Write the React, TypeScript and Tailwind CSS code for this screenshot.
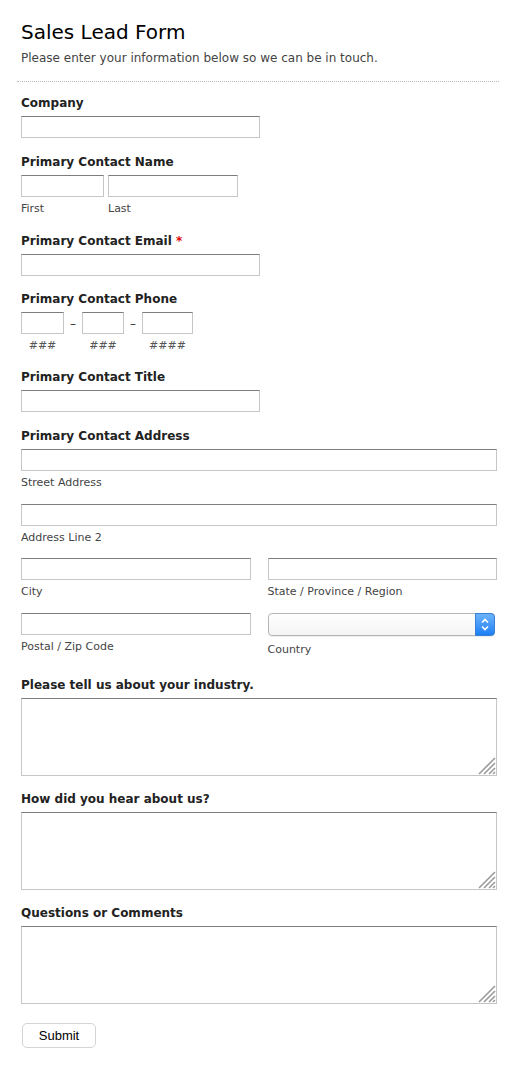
import React from "react";

const font = { fontFamily: '"DejaVu Sans", "Noto Sans", sans-serif' };

const inputCls =
  "block h-[22px] bg-white border border-[#c6c6c6] border-t-[#7d7d7d] outline-none";

function Label({ children }: { children: React.ReactNode }) {
  return (
    <div className="text-[12px] leading-[14px] font-bold text-[#222] mb-[6px]">
      {children}
    </div>
  );
}

function Sub({ children, className = "" }: { children: React.ReactNode; className?: string }) {
  return <div className={"text-[11px] leading-[13px] text-[#444] mt-[5px] " + className}>{children}</div>;
}

function Grip() {
  return (
    <svg className="absolute right-[1px] bottom-[1px] pointer-events-none" width="20" height="20" viewBox="0 0 20 20">
      <g stroke="#9a9a9a" strokeWidth="1.6">
        <line x1="19" y1="3" x2="3" y2="19" />
        <line x1="19" y1="8" x2="8" y2="19" />
        <line x1="19" y1="13" x2="13" y2="19" />
        <line x1="19" y1="17" x2="17" y2="19" />
      </g>
    </svg>
  );
}

function Area() {
  return (
    <div className="relative h-[78px]">
      <textarea className="block w-full h-[78px] resize-none bg-white border border-[#c6c6c6] border-t-[#7d7d7d] outline-none" />
      <Grip />
    </div>
  );
}

export default function App() {
  return (
    <div className="bg-white min-h-[1070px] pl-[21px] pr-[19px] pt-[20px]" style={font}>
      <div className="-ml-[4px] -mr-[2px] pl-[4px] pb-[16px] border-b border-dotted border-[#bbb]">
        <h1 className="text-[20px] leading-[24px] text-black font-normal">Sales Lead Form</h1>
        <p className="mt-[7px] text-[12px] leading-[14px] text-[#444]">
          Please enter your information below so we can be in touch.
        </p>
      </div>

      <div className="mt-[14px]">
        <Label>Company</Label>
        <input className={inputCls + " w-[239px]"} />
      </div>

      <div className="mt-[17px]">
        <Label>Primary Contact Name</Label>
        <div className="flex gap-[4px]">
          <div>
            <input className={inputCls + " w-[83px]"} />
            <Sub>First</Sub>
          </div>
          <div>
            <input className={inputCls + " w-[130px]"} />
            <Sub>Last</Sub>
          </div>
        </div>
      </div>

      <div className="mt-[19px]">
        <Label>
          Primary Contact Email <span className="text-[#d00]">*</span>
        </Label>
        <input className={inputCls + " w-[239px]"} />
      </div>

      <div className="mt-[16px]">
        <Label>Primary Contact Phone</Label>
        <div className="flex items-start">
          <div>
            <input className={inputCls + " w-[43px]"} />
            <Sub className="text-center text-[10px] text-[#555]">###</Sub>
          </div>
          <span className="w-[18px] text-center text-[12px] leading-[24px] text-[#333]">–</span>
          <div>
            <input className={inputCls + " w-[42px]"} />
            <Sub className="text-center text-[10px] text-[#555]">###</Sub>
          </div>
          <span className="w-[18px] text-center text-[12px] leading-[24px] text-[#333]">–</span>
          <div>
            <input className={inputCls + " w-[51px]"} />
            <Sub className="text-center text-[10px] text-[#555]">####</Sub>
          </div>
        </div>
      </div>

      <div className="mt-[18px]">
        <Label>Primary Contact Title</Label>
        <input className={inputCls + " w-[239px]"} />
      </div>

      <div className="mt-[17px]">
        <Label>Primary Contact Address</Label>
        <input className={inputCls + " w-full"} />
        <Sub>Street Address</Sub>
        <input className={inputCls + " w-full mt-[15px]"} />
        <Sub>Address Line 2</Sub>
        <div className="grid grid-cols-2 gap-x-[17px] mt-[14px]">
          <div>
            <input className={inputCls + " w-full"} />
            <Sub>City</Sub>
          </div>
          <div>
            <input className={inputCls + " w-full"} />
            <Sub>State / Province / Region</Sub>
          </div>
          <div className="mt-[15px]">
            <input className={inputCls + " w-full"} />
            <Sub>Postal / Zip Code</Sub>
          </div>
          <div className="mt-[15px] pr-[2px]">
            <div className="relative h-[23px] rounded-[4px] border border-[#b5b5b5] bg-gradient-to-b from-white to-[#f4f4f4] shadow-[0_1px_1px_rgba(0,0,0,0.08)]">
              <div className="absolute right-[-1px] top-[-1px] bottom-[-1px] w-[20px] rounded-r-[4px] bg-gradient-to-b from-[#6cb3fa] to-[#1a7ff5] border border-[#3a7fd6] flex items-center justify-center">
                <svg width="10" height="15" viewBox="0 0 10 15">
                  <path d="M2 5.5 L5 2.5 L8 5.5 M2 9.5 L5 12.5 L8 9.5" fill="none" stroke="white" strokeWidth="1.6" />
                </svg>
              </div>
            </div>
            <Sub className="mt-[7px]">Country</Sub>
          </div>
        </div>
      </div>

      <div className="mt-[22px]">
        <Label>Please tell us about your industry.</Label>
        <Area />
      </div>

      <div className="mt-[16px]">
        <Label>How did you hear about us?</Label>
        <Area />
      </div>

      <div className="mt-[16px]">
        <Label>Questions or Comments</Label>
        <Area />
      </div>

      <button className="mt-[19px] ml-[1px] w-[74px] h-[25px] rounded-[5px] border border-[#d4d4d4] bg-white text-[13px] text-black" style={{ fontFamily: '"Liberation Sans", Arial, sans-serif' }}>
        Submit
      </button>
    </div>
  );
}
